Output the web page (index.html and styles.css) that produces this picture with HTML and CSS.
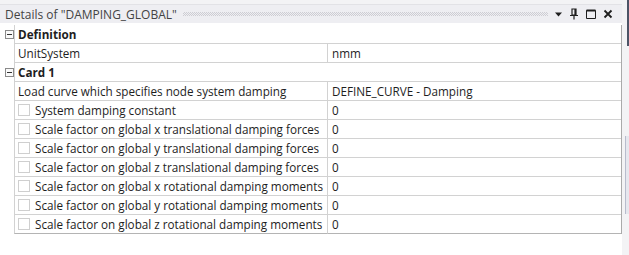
FILE: index.html
```html
<!DOCTYPE html>
<html lang="en">
<head>
  <meta charset="UTF-8" />
  <title>Details of "DAMPING_GLOBAL"</title>
  <link rel="stylesheet" href="styles.css">
</head>
<body>
  <div class="page">
    <div class="panel">
      <div class="titlebar">
        <span class="title">Details of "DAMPING_GLOBAL"</span>
        <span class="grip"></span>
        <span class="tools">
          <svg width="9" height="8" viewBox="0 0 9 8"><path d="M1 2.5h7L4.5 6.5z" fill="#1e1e1e"/></svg>
          <svg width="10" height="12" viewBox="0 0 10 12"><path d="M3 1h4v6H3z M6 1v6 M1 7.5h8 M5 7.5v4" fill="none" stroke="#1e1e1e" stroke-width="1.2"/></svg>
          <svg width="12" height="12" viewBox="0 0 12 12"><path d="M1.5 2.5h9v8h-9z" fill="none" stroke="#1e1e1e" stroke-width="1"/><path d="M1.5 2.5h9" stroke="#1e1e1e" stroke-width="2"/></svg>
          <svg width="10" height="10" viewBox="0 0 10 10"><path d="M1.5 1.5l7 7M8.5 1.5l-7 7" stroke="#1e1e1e" stroke-width="1.8"/></svg>
        </span>
      </div>

      <div class="grid">
        <div class="table">
          <div class="row section">
            <div class="gutter"><span class="toggle"></span></div>
            <div class="head">Definition</div>
          </div>
          <div class="row">
            <div class="gutter"></div>
            <div class="name">UnitSystem</div>
            <div class="value">nmm</div>
          </div>

          <div class="row section">
            <div class="gutter"><span class="toggle"></span></div>
            <div class="head">Card 1</div>
          </div>
          <div class="row">
            <div class="gutter"></div>
            <div class="name">Load curve which specifies node system damping</div>
            <div class="value">DEFINE_CURVE - Damping</div>
          </div>
          <div class="row">
            <div class="gutter"></div>
            <div class="name"><span class="check"></span>System damping constant</div>
            <div class="value">0</div>
          </div>
          <div class="row">
            <div class="gutter"></div>
            <div class="name"><span class="check"></span>Scale factor on global x translational damping forces</div>
            <div class="value">0</div>
          </div>
          <div class="row">
            <div class="gutter"></div>
            <div class="name"><span class="check"></span>Scale factor on global y translational damping forces</div>
            <div class="value">0</div>
          </div>
          <div class="row">
            <div class="gutter"></div>
            <div class="name"><span class="check"></span>Scale factor on global z translational damping forces</div>
            <div class="value">0</div>
          </div>
          <div class="row">
            <div class="gutter"></div>
            <div class="name"><span class="check"></span>Scale factor on global x rotational damping moments</div>
            <div class="value">0</div>
          </div>
          <div class="row">
            <div class="gutter"></div>
            <div class="name"><span class="check"></span>Scale factor on global y rotational damping moments</div>
            <div class="value">0</div>
          </div>
          <div class="row last">
            <div class="gutter"></div>
            <div class="name"><span class="check"></span>Scale factor on global z rotational damping moments</div>
            <div class="value">0</div>
          </div>
        </div>
      </div>
    </div>

    <div class="edge">
      <div class="edge-dark"></div>
      <div class="edge-box"></div>
    </div>
  </div>
</body>
</html>
```

FILE: styles.css
```css
* {
  margin: 0;
  padding: 0;
  box-sizing: border-box;
}

body {
  background: #f3f3f5;
  font-family: 'Open Sans', 'Noto Sans', sans-serif;
  font-size: 11.7px;
  color: #1e1e1e;
}

.page {
  display: flex;
  height: 255px;
}

.panel {
  width: 622px;
  padding-top: 4px;
  background: #f3f3f5;
}

.titlebar {
  display: flex;
  align-items: center;
  height: 19px;
  padding-left: 5px;
  background: #eeeef2;
  border-top: 1px solid #e2e2e6;
}

.title {
  color: #444;
  font-size: 12px;
  white-space: nowrap;
}

.grip {
  flex: 1;
  height: 4px;
  margin: 0 6px;
  background: repeating-conic-gradient(#cdcdd3 0 25%, transparent 0 50%) 0 0 / 2px 2px;
}

.tools {
  display: flex;
  align-items: center;
  gap: 6px;
  padding-right: 9px;
}

.tools svg {
  display: block;
}

.grid {
  background: white;
  padding-top: 2px;
  height: 232px;
}

.table {
  border-right: 1px solid #aaaaaa;
}

.row {
  display: grid;
  grid-template-columns: 14px 313px 1fr;
  height: 19px;
}

.row.section {
  grid-template-columns: 14px 1fr;
}

.gutter {
  display: flex;
  align-items: center;
  padding-left: 5px;
  background: white;
}

.toggle {
  width: 9px;
  height: 9px;
  border: 1px solid #8a8a8a;
  position: relative;
  background: #fafafa;
}

.toggle::after {
  content: '';
  position: absolute;
  left: 1px;
  right: 1px;
  top: 3px;
  height: 1px;
  background: #333;
}

.head,
.name,
.value {
  display: flex;
  align-items: center;
  white-space: nowrap;
  overflow: hidden;
  border-bottom: 1px solid #d2d2d2;
  border-left: 1px solid #d2d2d2;
}

.row.last .name,
.row.last .value {
  border-bottom-color: #b4b4b4;
}

.head {
  font-weight: bold;
  padding-left: 3px;
}

.name {
  padding-left: 3px;
}

.value {
  padding-left: 4px;
}

.check {
  display: inline-block;
  width: 12px;
  height: 12px;
  border: 1px solid #cfcfcf;
  margin-right: 5px;
  flex-shrink: 0;
}

.edge {
  flex: 1;
  display: flex;
  flex-direction: column;
  padding-left: 3px;
}

.edge-dark {
  height: 46px;
  margin-left: 2px;
  background: #4c5466;
}

.edge-box {
  margin-top: 90px;
  height: 78px;
  border-left: 1px solid #b8bccc;
  background: #e6e7ee;
}
```
